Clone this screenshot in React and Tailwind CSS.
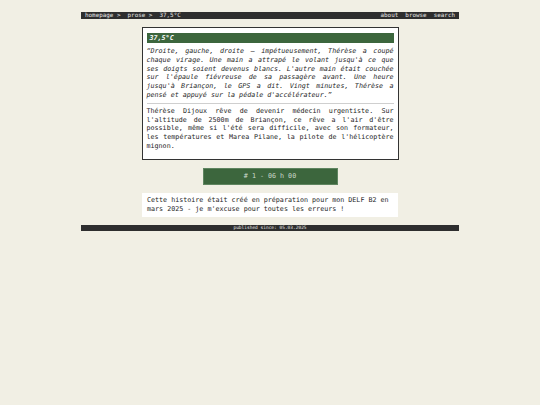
const mono = { fontFamily: '"DejaVu Sans Mono", "Liberation Mono", monospace' };

export default function App() {
  return (
    <div className="min-h-[405px] bg-[#f1efe4] pt-[12px]" style={mono}>
      <div className="mx-auto flex w-[378px] flex-col items-center">
        {/* top nav */}
        <div className="flex h-[7px] w-full items-center justify-between bg-[#2e2e2e] px-[4px] text-[5.9px] leading-none text-[#e6e6e6]">
          <span className="whitespace-pre">homepage &gt;  prose &gt;  37,5°C</span>
          <span className="whitespace-pre">about  browse  search</span>
        </div>

        {/* story card */}
        <div className="mt-[8px] w-[257px] border border-[#333] bg-white px-[4px] pt-[5px] pb-[8px] text-[6.7px] leading-[8.8px] text-[#1e1e1e]">
          <div className="flex h-[10px] items-center bg-[#3c663d] px-[3px] font-bold italic leading-none text-white">
            37,5°C
          </div>
          <p className="mt-[4px] text-justify italic">
            “Droite, gauche, droite — impétueusement, Thérèse a coupé chaque virage. Une main a attrapé le volant
            jusqu'à ce que ses doigts soient devenus blancs. L'autre main était couchée sur l'épaule fiévreuse de sa
            passagère avant. Une heure jusqu'à Briançon, le GPS a dit. Vingt minutes, Thérèse a pensé et appuyé sur la
            pédale d'accélérateur.”
          </p>
          <hr className="mt-[3px] border-t border-[#cfcfcf]" />
          <p className="mt-[3px] text-justify">
            Thérèse Dijoux rêve de devenir médecin urgentiste. Sur l'altitude de 2500m de Briançon, ce rêve a l'air
            d'être possible, même si l'été sera difficile, avec son formateur, les températures et Marea Pilane, la
            pilote de l'hélicoptère mignon.
          </p>
        </div>

        {/* chapter button */}
        <div className="mt-[8px] flex h-[17px] w-[135px] items-center justify-center border border-[#5f8560] bg-[#3c663d] text-[6.7px] leading-none text-[#cfdccf]">
          <span className="whitespace-pre"># 1 - 06 h 00</span>
        </div>

        {/* note */}
        <div className="mt-[8px] w-[256px] bg-white px-[5px] py-[3.5px] text-[6.7px] leading-[8.8px] text-[#1e1e1e]">
          Cette histoire était créé en préparation pour mon DELF B2 en mars 2025 - je m'excuse pour toutes les erreurs !
        </div>

        {/* footer */}
        <div className="mt-[8px] flex h-[6px] w-full items-center justify-center bg-[#2e2e2e] text-[4.5px] leading-none text-[#e6e6e6]">
          published since: 05.03.2025
        </div>
      </div>
    </div>
  );
}
